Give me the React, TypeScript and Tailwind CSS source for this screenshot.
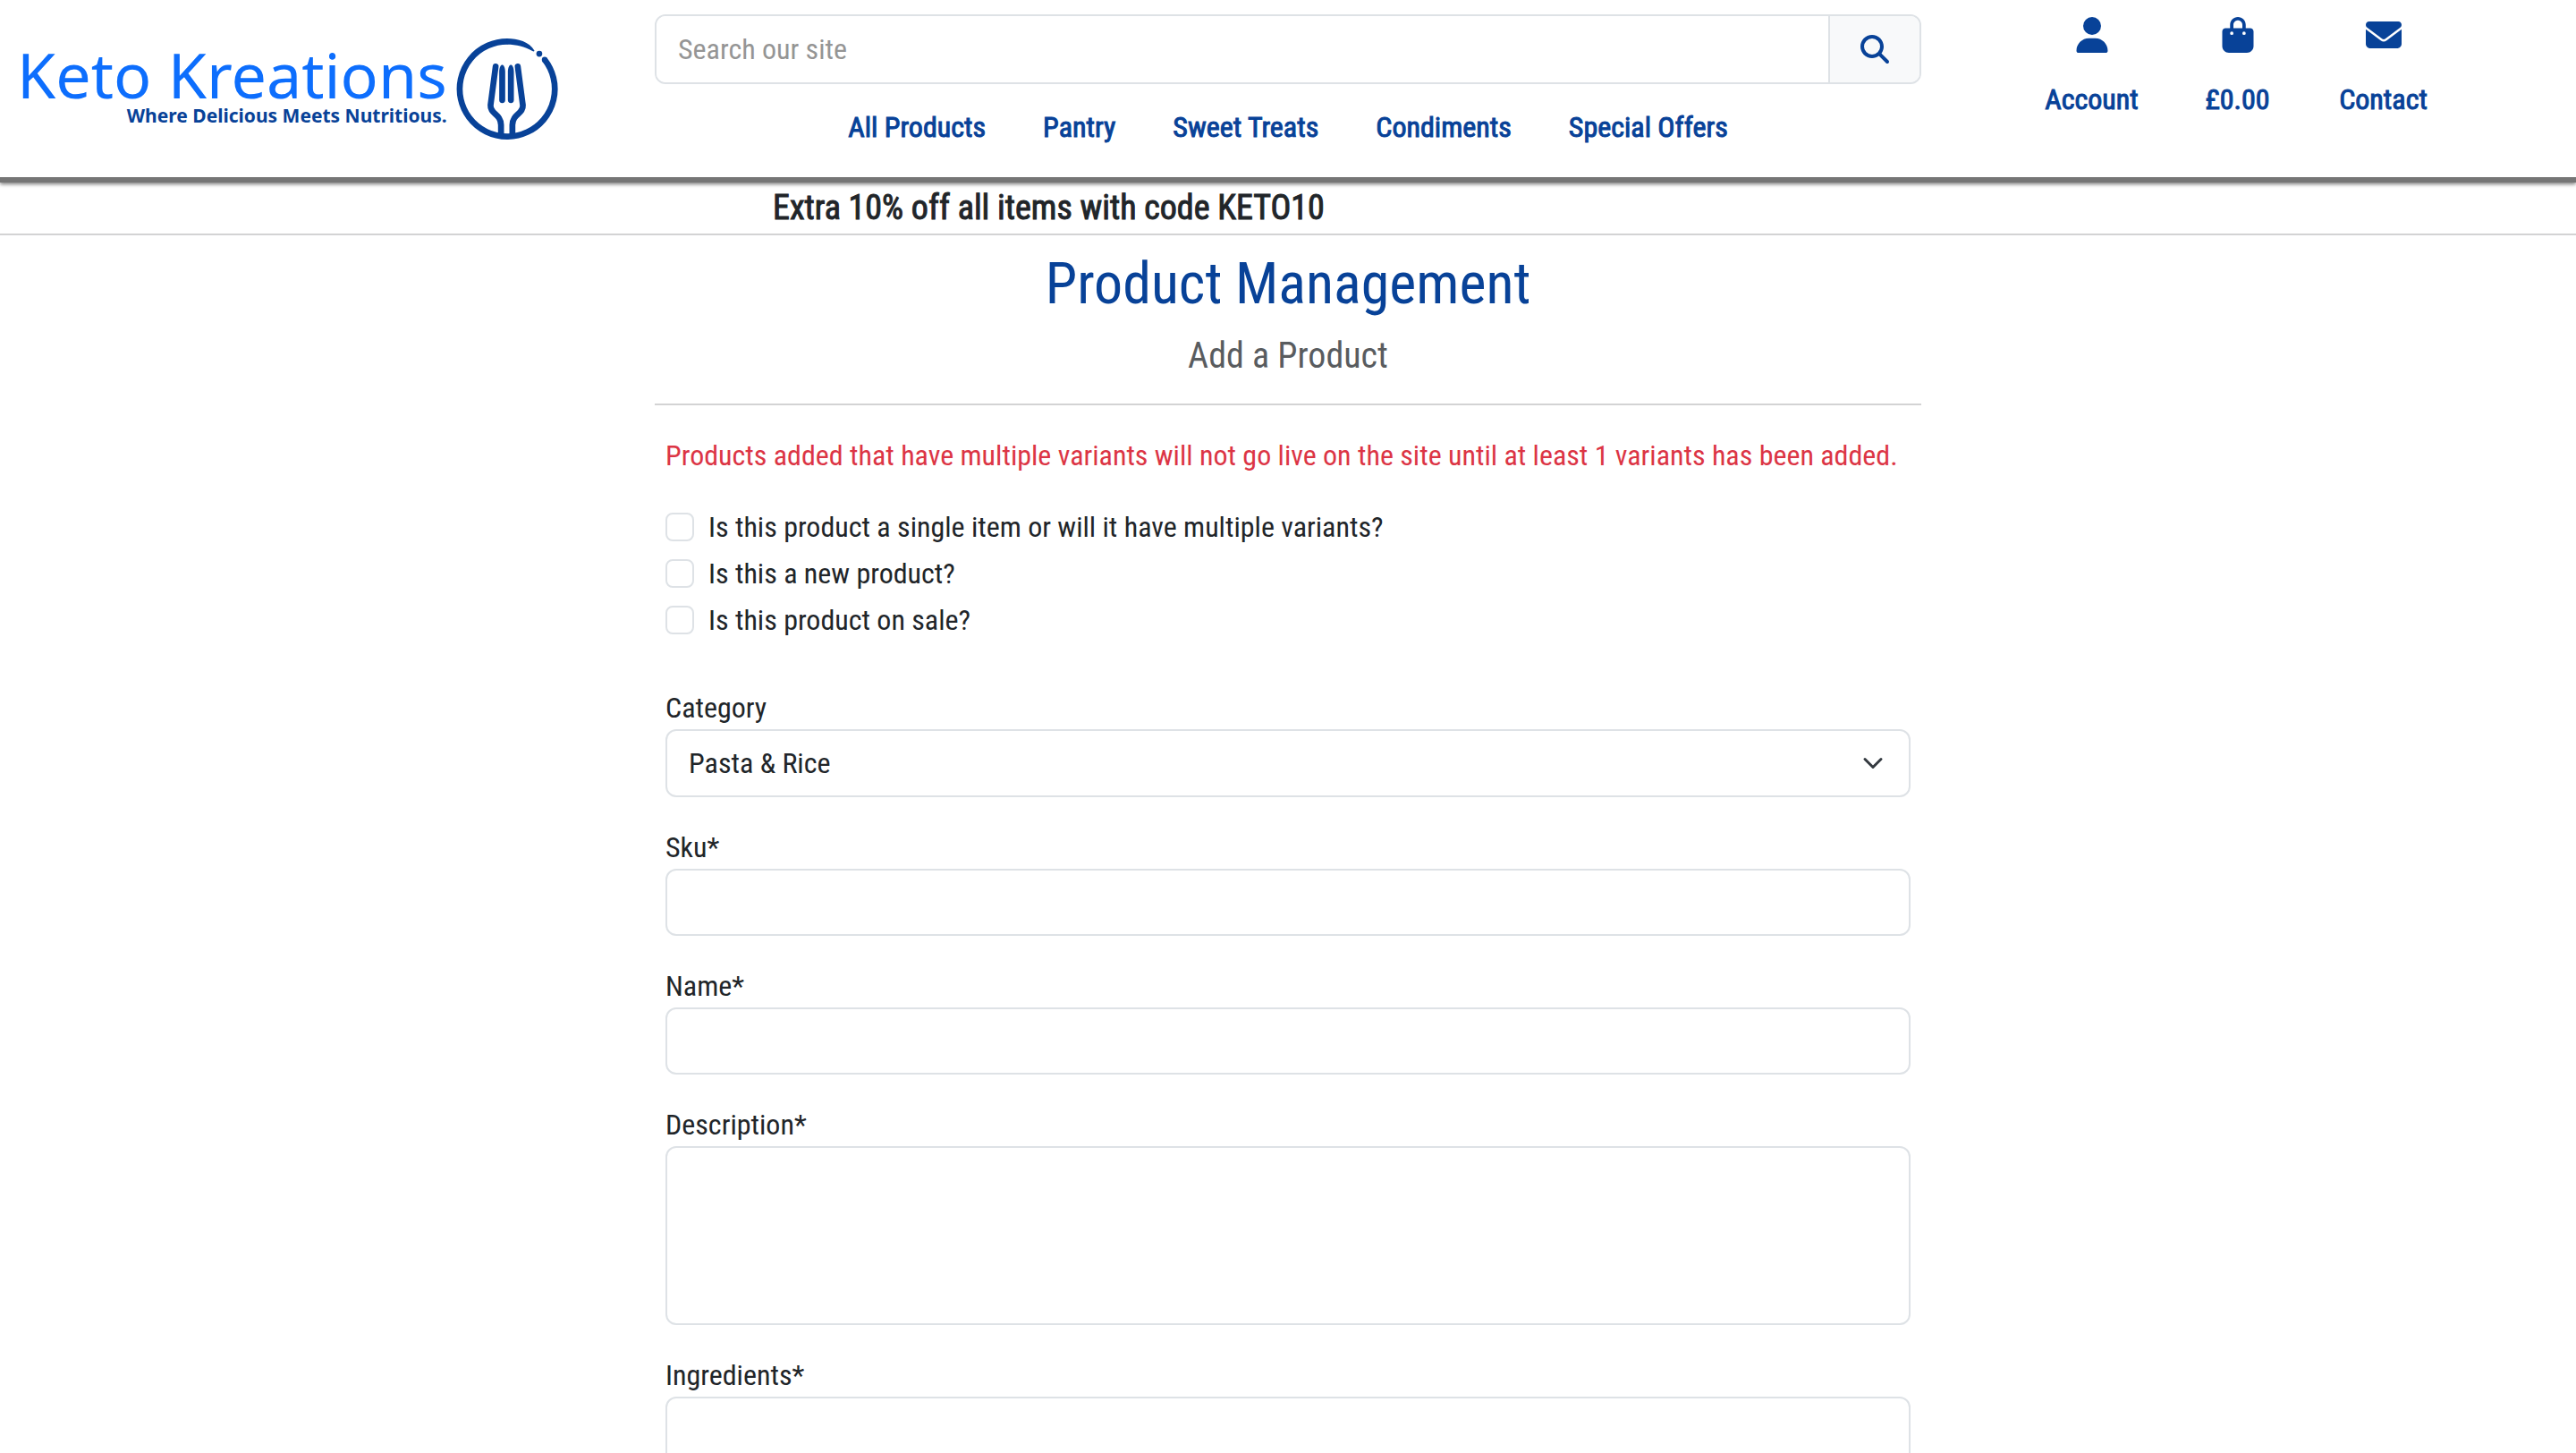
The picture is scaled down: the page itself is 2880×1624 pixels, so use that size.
import type { ReactNode } from 'react';
import { FaBagShopping, FaEnvelope, FaMagnifyingGlass, FaUser } from 'react-icons/fa6';

const navLinks = ['All Products', 'Pantry', 'Sweet Treats', 'Condiments', 'Special Offers'];

const siteLinks = [
  { label: 'Account', icon: FaUser },
  { label: '£0.00', icon: FaBagShopping },
  { label: 'Contact', icon: FaEnvelope },
];

const checks = [
  { id: 'has_variants', label: 'Is this product a single item or will it have multiple variants?' },
  { id: 'is_new', label: 'Is this a new product?' },
  { id: 'on_sale', label: 'Is this product on sale?' },
];

const fieldClass =
  'block w-full rounded-xl border-2 border-[#dee2e6] bg-white px-6 text-[#212529] outline-none';

function ForkMark() {
  return (
    <svg viewBox="58 36 344 344" className="size-[115px] shrink-0" aria-hidden="true" fill="none" stroke="#084298" strokeLinecap="round">
      <path d="M354 110A159 159 0 1 1 230 49" strokeWidth="20" strokeLinecap="butt" />
      <circle cx="354" cy="110" r="9.500" fill="#084298" stroke="none" />
      <path d="M228 39C264 39 303 50 320 80C318 83 316 83 313 81C286 66 260 59 228 59Z" fill="#084298" stroke="none" />
      <circle cx="336" cy="90" r="10" fill="#084298" stroke="none" />
      <path d="M190 133L173 262C171 292 207 290 208 328V360" strokeWidth="20" />
      <path d="M264 133L281 262C283 292 247 290 246 328V360" strokeWidth="20" />
      <path d="M202 150C203 120 221 120 222 150V245A10 10 0 0 1 202 245Z" fill="#084298" stroke="none" />
      <path d="M231 150C232 120 250 120 251 150V245A10 10 0 0 1 231 245Z" fill="#084298" stroke="none" />
    </svg>
  );
}

function Field({ id, label, children }: { id: string; label: string; children: ReactNode }) {
  return (
    <div className="mb-8">
      <label htmlFor={id} className="block">{label}</label>
      {children}
    </div>
  );
}

export default function App() {
  return (
    <div className="h-screen overflow-hidden bg-white font-['Roboto_Condensed','Liberation_Sans_Narrow',Roboto,sans-serif] text-[32px] leading-[48px] text-[#212529]">
      <header className="flex h-[204px] border-b-[6px] border-[#757575] bg-white shadow-[0_2px_4px_rgba(0,0,0,0.5)]">
        <a href="#home" className="flex w-1/4 items-center gap-2.5 pl-[19px] font-['Noto_Sans',sans-serif]">
          <span className="flex flex-col items-end">
            <span className="text-[70px] leading-[60px] text-[#0d6efd]">Keto Kreations</span>
            <span className="text-[21px] leading-[32px] font-bold text-[#084298]">Where Delicious Meets Nutritious.</span>
          </span>
          <ForkMark />
        </a>
        <div className="w-1/2 px-3 pt-4">
          <form role="search" className="flex h-[78px] overflow-hidden rounded-xl border-2 border-[#dee2e6]">
            <input type="search" aria-label="Search our site" placeholder="Search our site" className="min-w-0 flex-1 bg-white px-6 outline-none placeholder:text-[#959595]" />
            <button type="button" aria-label="Search" className="flex w-[102px] items-center justify-center border-l-2 border-[#dee2e6] bg-[#f8f9fa] text-[#084298]">
              <FaMagnifyingGlass className="size-8" />
            </button>
          </form>
          <nav className="mt-6 flex justify-center gap-16 text-[#084298] [-webkit-text-stroke:1px]">
            {navLinks.map((l) => <a key={l} href="#products">{l}</a>)}
          </nav>
        </div>
        <nav className="flex w-1/4 pt-4 pl-[97px] text-[#084298] [-webkit-text-stroke:1px]">
          {siteLinks.map(({ label, icon: Icon }) => (
            <a key={label} href="#account" className="flex w-[163px] flex-col items-center gap-7 pt-[3px]">
              <Icon className="size-10" />
              <span>{label}</span>
            </a>
          ))}
        </nav>
      </header>

      <div className="border-b-2 border-[#d3d3d4] pl-[30%]">
        <p className="text-[38px] leading-[57px] [-webkit-text-stroke:1px]">Extra 10% off all items with code KETO10</p>
      </div>

      <main className="mx-auto w-1/2 px-3">
        <div className="border-b-2 border-[#d3d3d4] pt-4 pb-7 text-center">
          <h1 className="text-[64px] leading-[78px] text-[#084298]">Product Management</h1>
          <h2 className="mt-4 text-[40px] leading-[50px] text-[#595c5f]">Add a Product</h2>
        </div>
        <form className="px-3 pt-8">
          <p className="text-[#dc3545]">
            Products added that have multiple variants will not go live on the site until at least 1 variants has been added.
          </p>
          <div className="mt-8 mb-[50px] flex flex-col gap-1">
            {checks.map((c) => (
              <div key={c.id} className="flex items-center gap-4">
                <input id={c.id} type="checkbox" className="size-8 appearance-none rounded-lg border-2 border-[#dee2e6] bg-white" />
                <label htmlFor={c.id}>{c.label}</label>
              </div>
            ))}
          </div>
          <Field id="category" label="Category">
            <div className="relative">
              <select id="category" className={`${fieldClass} h-[76px] appearance-none`}>
                <option>Pasta &amp; Rice</option>
              </select>
              <svg viewBox="0 0 16 16" className="pointer-events-none absolute top-[26px] right-[30px] size-6" fill="none" stroke="#343a40" strokeWidth="2" strokeLinecap="round" strokeLinejoin="round" aria-hidden="true">
                <path d="m2 5 6 6 6-6" />
              </svg>
            </div>
          </Field>
          <Field id="sku" label="Sku*"><input id="sku" type="text" className={`${fieldClass} h-[75px]`} /></Field>
          <Field id="name" label="Name*"><input id="name" type="text" className={`${fieldClass} h-[75px]`} /></Field>
          <Field id="description" label="Description*"><textarea id="description" className={`${fieldClass} h-[200px] resize-none`} /></Field>
          <Field id="ingredients" label="Ingredients*"><textarea id="ingredients" className={`${fieldClass} h-[200px] resize-none`} /></Field>
        </form>
      </main>
    </div>
  );
}
